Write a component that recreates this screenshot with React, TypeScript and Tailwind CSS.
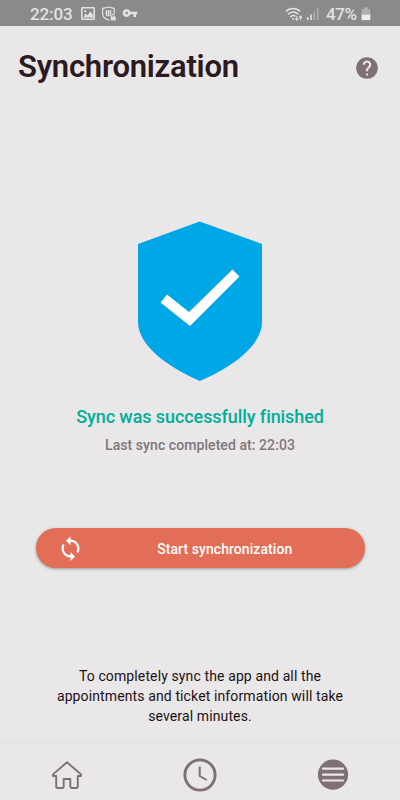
import React from 'react';
import { MdHelp, MdSync, MdVpnKey } from 'react-icons/md';

const StatusBar: React.FC = () => (
  <div className="h-[26px] shrink-0 bg-[#8a8a8a] text-[#e2e2e2] flex items-center justify-between pl-[30px] pr-[29px]">
    <div className="flex items-center">
      <span className="text-[17px] leading-[26px] font-medium tracking-[-0.1px] w-[51px] pt-[2px]">22:03</span>
      {/* Gallery */}
      <svg className="w-[14px] h-[13px] mt-[1px]" viewBox="0 0 14 13" fill="none" stroke="currentColor">
        <rect x=".8" y=".8" width="12.4" height="11.4" rx=".6" strokeWidth="1.6" />
        <path d="M2.2 10.4L4.6 6.6L6.4 8.6L9.2 4.6L12 7.8V10.4Z" fill="currentColor" stroke="none" />
        <circle cx="4.3" cy="4.2" r="1.1" fill="currentColor" stroke="none" />
      </svg>
      {/* Secure folder */}
      <svg className="w-4 h-4 ml-[6px] mt-[1px]" viewBox="0 0 16 16" fill="none" stroke="currentColor">
        <path d="M8 14.2C4 13.2 1.6 11 1.6 7.6V2.4C4 2 6 1.2 7.5 1C9 1.2 11 2 13.2 2.4V8" strokeWidth="1.2" />
        <path d="M4.3 5.2h6.4M4.3 7.3h6.4M5.1 9.3h4.8M5.6 4v6.3M7.5 4v6.3M9.4 4v6.3" strokeWidth=".9" />
        <path d="M10.6 11V9.8a1.4 1.4 0 0 1 2.8 0V11" strokeWidth="1" />
        <rect x="9.7" y="10.6" width="5" height="3.8" fill="currentColor" stroke="none" />
      </svg>
      <MdVpnKey className="w-4 h-4 ml-[5px]" />
    </div>
    <div className="flex items-center">
      {/* Wifi with data arrows */}
      <svg className="w-[18px] h-[16px] mt-px" viewBox="0 0 18 16" fill="none" stroke="currentColor" strokeWidth="1.4">
        <path d="M.8 5.5C5 1.4 11 1.4 15.2 5.5M3 8.3C6.2 5.4 10 5.4 13.2 8.1M5.2 11C7 9.2 9 9.2 10.5 10.2" />
        <circle cx="8" cy="13" r="1" fill="currentColor" stroke="none" />
        <path d="M11.8 10v4M10.4 12.7l1.4 1.5 1.4-1.5M15.6 14.2v-4M14.2 11.6l1.4-1.5 1.4 1.5" strokeWidth="1.1" />
      </svg>
      <svg className="w-[12px] h-[14px] ml-[4px] mt-[2px]" viewBox="0 0 12 14" fill="currentColor">
        <rect x="0" y="10" width="1.6" height="3" />
        <rect x="3.2" y="7.5" width="1.6" height="5.5" />
        <rect x="6.5" y="4.4" width="1.6" height="8.6" opacity=".4" />
        <rect x="9.9" y="1" width="1.6" height="12" opacity=".4" />
      </svg>
      <span className="text-[17px] leading-[26px] font-medium ml-[7px] w-[35px] pt-[2px] tracking-[-0.4px]">47%</span>
      <svg className="w-[10px] h-[14px] mt-px" viewBox="0 0 10 14">
        <path d="M3 .5h4v1.8h2.3V7.5H.6V2.3H3z" fill="#b0b0b0" />
        <path d="M.6 7.5h8.7v5.6H.6z" fill="#eeeeee" />
      </svg>
    </div>
  </div>
);

const ShieldCheck: React.FC = () => (
  <svg className="w-[126px] h-[162px]" viewBox="0 0 126 162">
    <path d="M62.7 1.5L125 24V102C125 124 98 146 62.7 161C28 146 1 124 1 102V24Z" fill="#00a7e7" />
    <path d="M23.5 82.6L30 74.6L52 92L95.5 49.6L102.5 56.6L53 106Z" fill="#fff" />
  </svg>
);

const BottomNav: React.FC = () => (
  <nav className="h-[58px] shrink-0 border-t border-[#e1dfe0] grid grid-cols-3 place-items-center text-[#7e7076] pt-[6px]">
    <svg className="w-8 h-8" viewBox="0 0 32 32" fill="none" stroke="currentColor" strokeWidth="1.9" strokeLinejoin="round">
      <path d="M16 3.2L30 15.4V17H26.8V27.3Q26.8 29 25.2 29H20.6Q19.3 29 19.3 27.6V20H12.7V27.6Q12.7 29 11.4 29H6.8Q5.2 29 5.2 27.3V17H2V15.4Z" />
    </svg>
    <svg className="w-9 h-9" viewBox="0 0 36 36" fill="none" stroke="currentColor">
      <circle cx="18" cy="18" r="15.1" strokeWidth="2.9" />
      <path d="M17.7 9.6V19L24.7 23" strokeWidth="2" />
    </svg>
    <svg className="w-8 h-8" viewBox="0 0 32 32">
      <circle cx="16" cy="15.6" r="15.1" fill="currentColor" />
      <path d="M6 9.7H26M6 15.7H26M6 21.5H26" stroke="#ebe9ea" strokeWidth="2.2" strokeLinecap="round" />
    </svg>
  </nav>
);

const App: React.FC = () => {
  return (
    <div className="w-[400px] h-[800px] flex flex-col overflow-hidden bg-[#e9e7e8] font-['Roboto',sans-serif]">
      <StatusBar />

      <header className="flex items-center justify-between pl-[18px] pr-5 pt-[23px]">
        <h1 className="text-[31px] leading-9 font-semibold tracking-[-0.24px] text-[#2b1a21]">Synchronization</h1>
        <MdHelp className="w-[26px] h-[26px] text-[#7e7076] mt-[2px]" />
      </header>

      <main className="flex-1 flex flex-col items-center pt-[135px] text-center">
        <ShieldCheck />
        <p className="mt-[23px] text-lg leading-6 font-medium tracking-[-0.08px] text-[#00ae98]">
          Sync was successfully finished
        </p>
        <p className="mt-[6px] text-sm leading-5 font-medium tracking-[0.07px] text-[#81767a]">
          Last sync completed at: 22:03
        </p>

        <button className="mt-[73px] w-[329px] h-10 rounded-full bg-[#e26e57] text-white flex items-center shadow-[0_1px_3px_rgba(0,0,0,0.35)]">
          <MdSync className="w-[27px] h-[27px] ml-[21.5px]" />
          <span className="flex-1 pl-[4px] pr-[3px] pt-px text-sm font-medium tracking-[0.07px]">Start synchronization</span>
        </button>

        <p className="mt-[98px] w-[310px] text-sm leading-5 tracking-[0.12px] text-[#1c1116]">
          To completely sync the app and all the appointments and ticket information will take several minutes.
        </p>
      </main>

      <BottomNav />
    </div>
  );
};

export default App;
